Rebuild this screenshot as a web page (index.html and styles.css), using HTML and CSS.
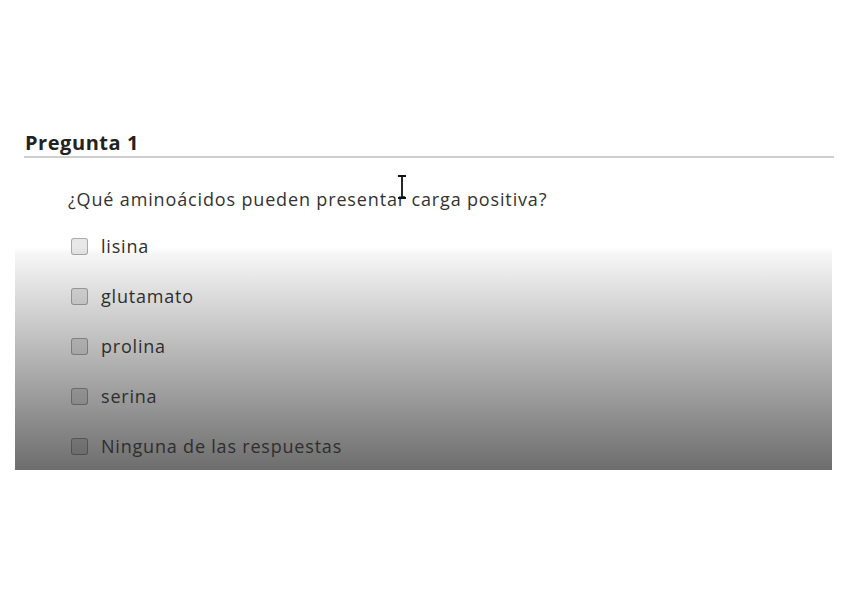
FILE: index.html
```html
<!DOCTYPE html>
<html lang="es">
<head>
<meta charset="utf-8">
<title>Pregunta 1</title>
<link rel="stylesheet" href="styles.css">
</head>
<body>
<div class="page">
  <h2 class="title">Pregunta 1</h2>
  <div class="panel">
    <p class="question">¿Qué aminoácidos pueden presentar carga positiva?</p>
    <ul class="options">
      <li class="option"><span class="box"></span><span class="label">lisina</span></li>
      <li class="option"><span class="box"></span><span class="label">glutamato</span></li>
      <li class="option"><span class="box"></span><span class="label">prolina</span></li>
      <li class="option"><span class="box"></span><span class="label">serina</span></li>
      <li class="option"><span class="box"></span><span class="label">Ninguna de las respuestas</span></li>
    </ul>
    <svg class="cursor" width="12" height="24" viewBox="0 0 12 24"><path d="M2 1h8M6 1v22M2 23h8" stroke="#111" stroke-width="1.8" fill="none"/></svg>
  </div>
</div>
</body>
</html>
```

FILE: styles.css
```css
html, body {
  margin: 0;
  padding: 0;
  background: #fff;
}
.page {
  padding-top: 129px;
  font-family: "Open Sans", "Liberation Sans", sans-serif;
}
.title {
  margin: 0 0 0 24px;
  width: 809px;
  padding-left: 1px;
  font-size: 20px;
  font-weight: 700;
  letter-spacing: 0.55px;
  color: #222;
  line-height: 27px;
  border-bottom: 2px solid #cfcfcf;
}
.panel {
  position: relative;
  margin-left: 15px;
  width: 817px;
  height: 311px;
  margin-top: 1px;
  background: linear-gradient(to bottom, #fff 0px, #fff 88px, #f6f6f6 95px, #6d6d6d 311px);
  box-sizing: border-box;
}
.question {
  margin: 0;
  padding: 28px 0 0 53px;
  font-size: 18px;
  letter-spacing: 0.85px;
  line-height: 24px;
  color: #333;
}
.options {
  list-style: none;
  margin: 0;
  padding: 10px 0 0 56px;
}
.option {
  display: flex;
  align-items: center;
  height: 50px;
  gap: 13px;
}
.box {
  width: 17px;
  height: 17px;
  border: 1px solid rgba(0,0,0,0.27);
  border-radius: 3px;
  background: rgba(0,0,0,0.09);
  box-sizing: border-box;
  flex: none;
}
.label {
  font-size: 18px;
  letter-spacing: 0.8px;
  color: #2e2e2e;
  line-height: 24px;
}
.cursor {
  position: absolute;
  left: 381px;
  top: 16px;
}
```
